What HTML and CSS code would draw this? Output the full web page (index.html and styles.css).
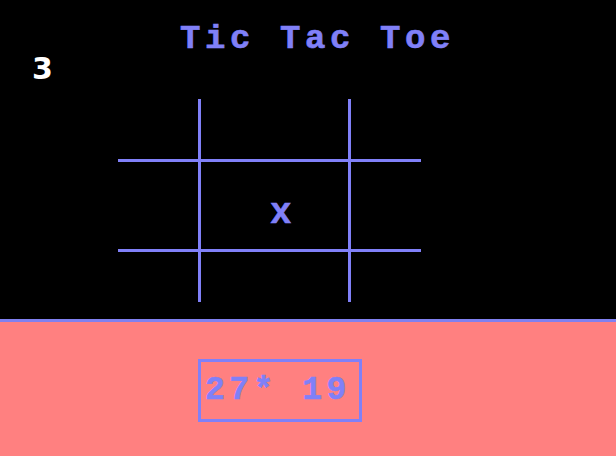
FILE: index.html
```html
<!DOCTYPE html>
<html>
<head>
<meta charset="utf-8">
<link rel="stylesheet" href="styles.css">
</head>
<body>
<div class="page">
  <section class="top">
    <h1 class="title">Tic Tac Toe</h1>
    <div class="score">3</div>
    <div class="board">
      <div class="cell"></div>
      <div class="cell"></div>
      <div class="cell"></div>
      <div class="cell"></div>
      <div class="cell mark">x</div>
      <div class="cell"></div>
      <div class="cell"></div>
      <div class="cell"></div>
      <div class="cell"></div>
    </div>
  </section>
  <section class="bottom">
    <div class="answer">27* 19</div>
  </section>
</div>
</body>
</html>
```

FILE: styles.css
```css
html, body {
  margin: 0;
  padding: 0;
  background: #000;
}
.page {
  width: 616px;
  height: 456px;
  display: flex;
  flex-direction: column;
  overflow: hidden;
}
.top {
  height: 319px;
  background: #000;
  display: flex;
  flex-direction: column;
}
.title {
  margin: 0;
  padding: 24px 0 0 180px;
  height: 32px;
  font-family: "Liberation Mono", monospace;
  font-weight: bold;
  font-size: 34px;
  letter-spacing: 4.6px;
  line-height: 30px;
  color: #8080f8;
  -webkit-text-stroke: 0.6px #8080f8;
  white-space: nowrap;
}
.score {
  margin: 0 0 0 32px;
  font-family: "DejaVu Sans", sans-serif;
  font-weight: bold;
  font-size: 30px;
  line-height: 25px;
  height: 43px;
  color: #fff;
}
.board {
  margin-left: 118px;
  width: 303px;
  display: grid;
  grid-template-columns: 80px 147px 70px;
  grid-template-rows: 60px 87px 50px;
  gap: 3px;
  background: #8080f8;
}
.cell {
  background: #000;
}
.mark {
  font-family: "Liberation Mono", monospace;
  font-weight: bold;
  font-size: 36px;
  line-height: 36px;
  color: #8080f8;
  -webkit-text-stroke: 0.6px #8080f8;
  padding: 34px 0 0 69px;
}
.bottom {
  flex: 1;
  background: #ff8080;
  border-top: 3px solid #8080f0;
  display: flex;
  flex-direction: column;
}
.answer {
  margin: 37px 0 0 198px;
  width: 154px;
  height: 57px;
  border: 3px solid #8080f8;
  font-family: "Liberation Mono", monospace;
  font-weight: bold;
  font-size: 33px;
  letter-spacing: 4.5px;
  line-height: 57px;
  padding-left: 4px;
  box-sizing: content-box;
  color: #8080f8;
  -webkit-text-stroke: 0.6px #8080f8;
  white-space: nowrap;
}
```
